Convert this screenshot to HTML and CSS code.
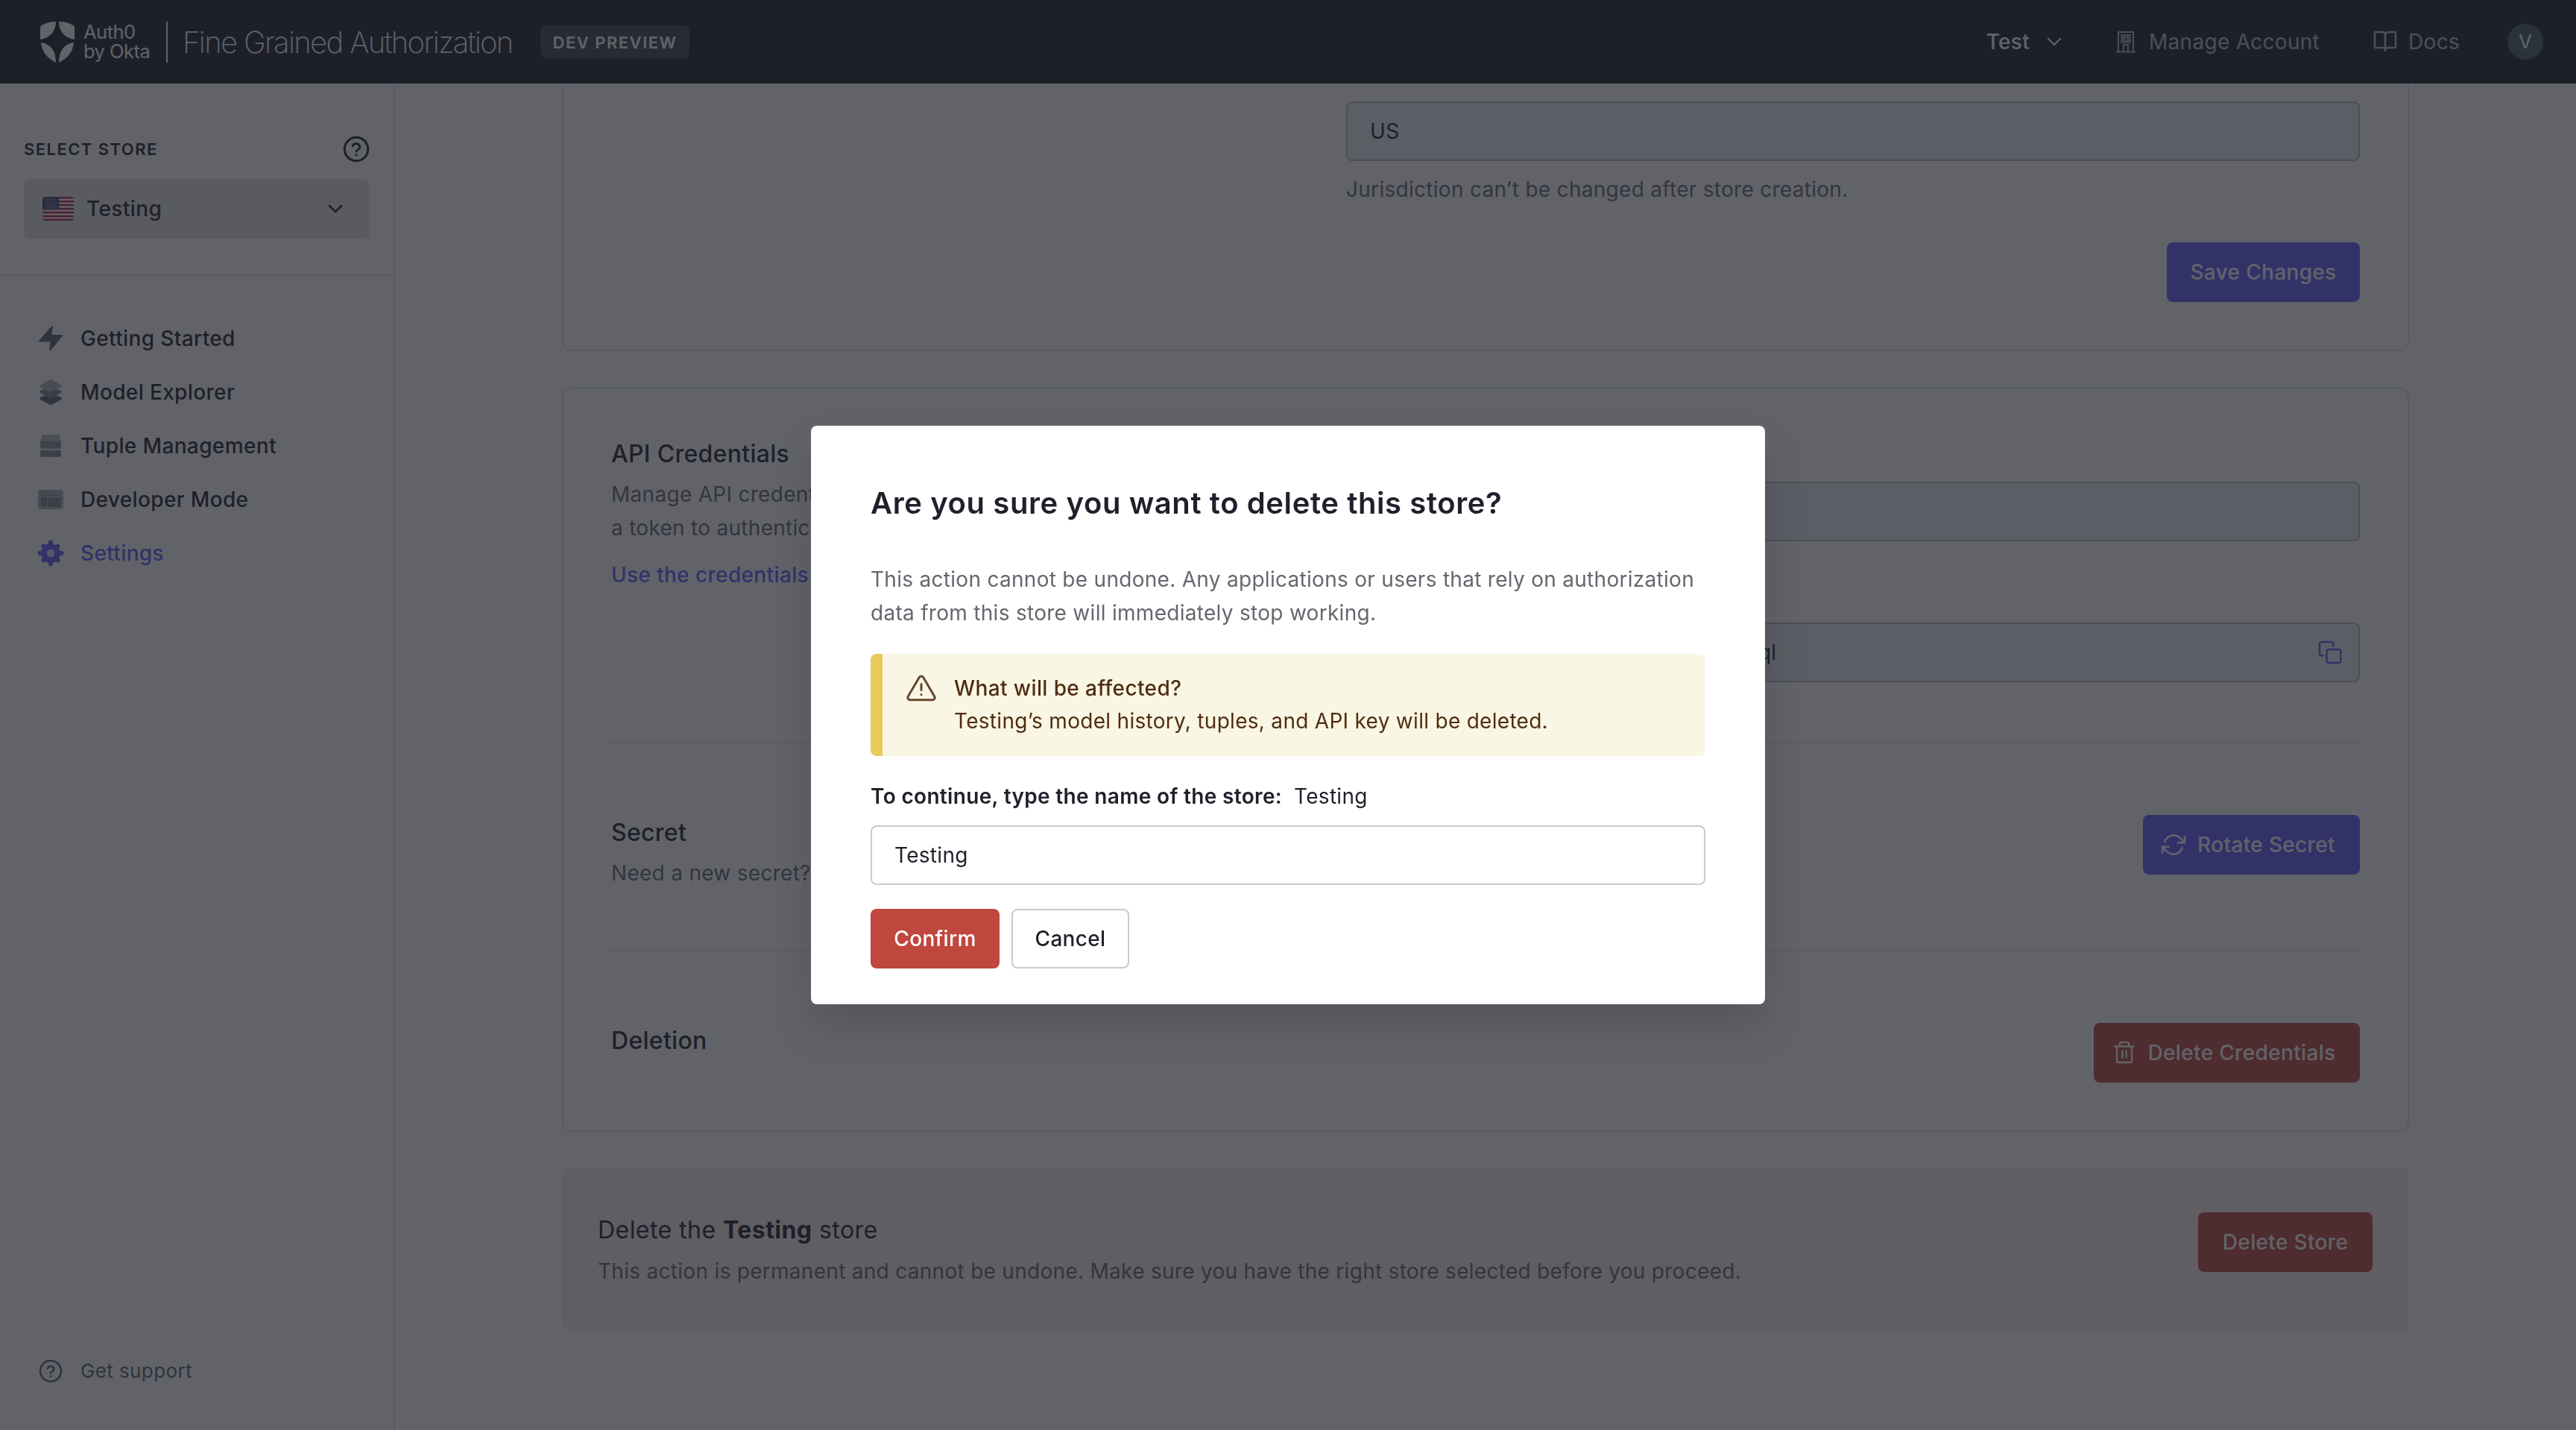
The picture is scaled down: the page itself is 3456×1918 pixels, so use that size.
FILE: index.html
```html
<!DOCTYPE html>
<html lang="en">
<head>
    <meta charset="UTF-8">
    <meta name="viewport" content="width=device-width, initial-scale=1.0">
    <title>Settings - Fine Grained Authorization</title>
    <link rel="stylesheet" href="styles.css">
</head>
<body>
    <!-- Header -->
    <header class="topbar">
        <svg class="shield" viewBox="0 0 46 55">
            <path d="M0 24V8Q0 6 2 5Q10 0 21 0C21 13 13 22 0 24Z"/>
            <path d="M46 24V8Q46 6 44 5Q36 0 25 0C25 13 33 22 46 24Z"/>
            <path d="M1 28C14 30 21 39 21 55C9 49 2 40 1 28Z"/>
            <path d="M45 28C32 30 25 39 25 55C37 49 44 40 45 28Z"/>
        </svg>
        <div class="brand">Auth0<br>by Okta</div>
        <div class="brand-line"></div>
        <div class="product">Fine Grained Authorization</div>
        <div class="pill">DEV PREVIEW</div>

        <nav class="topnav">
            <a class="tenant">Test
                <svg class="chevron" viewBox="0 0 20 12"><path d="M2 2l8 8 8-8"/></svg>
            </a>
            <a class="account">
                <svg class="icon-building" viewBox="0 0 28 30">
                    <path d="M1 28.5h26M4 28V2h20v26M11 28v-9h6v9"/>
                    <path d="M8.5 6h4v3.5h-4zM15.5 6h4v3.5h-4zM8.5 12.5h4V16h-4zM15.5 12.5h4V16h-4z"/>
                </svg>
                <span>Manage Account</span>
            </a>
            <a class="docs">
                <svg class="icon-book" viewBox="0 0 32 30">
                    <path d="M16 6c0-2.500-2-4-4.500-4H2v21h10c2.500 0 4 1.500 4 4M16 6c0-2.500 2-4 4.500-4H30v21H20c-2.500 0-4 1.500-4 4V6"/>
                </svg>
                <span>Docs</span>
            </a>
            <div class="avatar">V</div>
        </nav>
    </header>

    <div class="layout">
        <!-- Sidebar -->
        <aside class="sidebar">
            <div class="store">
                <div class="store-head">
                    <span>SELECT STORE</span>
                    <svg class="icon-help" viewBox="0 0 24 24"><circle cx="12" cy="12" r="10.500"/><path d="M8.800 9.300a3.300 3.300 0 0 1 6.400 1c0 2-3.200 2.300-3.200 3.700M12 17.200v.1"/></svg>
                </div>
                <div class="store-select">
                    <svg class="flag" viewBox="0 0 42 32">
                        <clipPath id="flag-clip"><rect width="42" height="32" rx="4"/></clipPath>
                        <g clip-path="url(#flag-clip)">
                            <rect width="42" height="32" fill="#fff"/>
                            <path d="M0 1.200h42M0 6.200h42M0 11.100h42M0 16h42M0 20.900h42M0 25.900h42M0 30.800h42" stroke="#b22234" stroke-width="2.460"/>
                            <rect width="22" height="17.200" fill="#3c3b6e"/>
                            <path d="M3 3.500h17M5 6.500h14M3 9.500h17M5 12.500h14M3 15h17" stroke="#fff" stroke-width="1.300" stroke-dasharray="1.300 2.800"/>
                        </g>
                    </svg>
                    <span>Testing</span>
                    <svg class="chevron" viewBox="0 0 20 12"><path d="M2 2l8 8 8-8"/></svg>
                </div>
            </div>

            <ul class="menu">
                <li>
                    <svg viewBox="0 0 36 36"><path d="M19 1.500q2-1.500 2 1L19.500 13H33q2 0 .8 1.800L18 34q-2 1.500-1.800-1L17.500 22.500H3.500q-2.500 0-1-2z" fill="#5b5f6d"/></svg>
                    <span>Getting Started</span>
                </li>
                <li>
                    <svg viewBox="0 0 36 36">
                        <path d="M4 25l14-6 14 6q2 1.500 0 2.800L20 34.500q-2 1-4 0L4 27.800q-2-1.300 0-2.800z" fill="#5b5f6d"/>
                        <path d="M4 16l14-6 14 6q2 1.500 0 2.800L20 25.500q-2 1-4 0L4 18.800q-2-1.300 0-2.800z" fill="#85888f"/>
                        <path d="M4 8.500L16 1.500q2-1 4 0l12 7q2 1.300 0 2.600l-12 5.800q-2 1-4 0L4 11.100q-2-1.300 0-2.600z" fill="#b0b2b6"/>
                    </svg>
                    <span>Model Explorer</span>
                </li>
                <li>
                    <svg viewBox="0 0 36 36">
                        <path d="M8 3h20q1 0 1.500 1L32 12H4L6.500 4Q7 3 8 3z" fill="#b8babf"/>
                        <path d="M4 12h28v7q0 2-2 2H6q-2 0-2-2z" fill="#8f929b"/>
                        <path d="M5 21h26v2H5z" fill="#b8babf"/>
                        <path d="M4 24h28v7q0 2-2 2H6q-2 0-2-2z" fill="#888b92"/>
                        <circle cx="27.500" cy="16.500" r="1.200" fill="#5b5f6d"/>
                        <circle cx="27.500" cy="28.500" r="1.200" fill="#5b5f6d"/>
                    </svg>
                    <span>Tuple Management</span>
                </li>
                <li>
                    <svg viewBox="0 0 36 36">
                        <rect x="1" y="5" width="34" height="26" rx="3" fill="#b0b2b6"/>
                        <path d="M4.500 12h27" stroke="#85888f" stroke-width="1.500"/>
                        <rect x="4.500" y="15" width="8.500" height="13" rx="1.500" fill="#85888f"/>
                        <rect x="14.500" y="15" width="17" height="13" rx="1.500" fill="#85888f"/>
                        <path d="M5 8.200h1.500M7.800 8.200h1.500M10.600 8.200h1.500" stroke="#5b5f6d" stroke-width="1.500"/>
                    </svg>
                    <span>Developer Mode</span>
                </li>
                <li class="active">
                    <svg viewBox="0 0 36 36">
                        <circle cx="18" cy="18" r="9" fill="none" stroke="currentColor" stroke-width="8"/>
                        <path d="M18 3.500v29M3.500 18h29M8.500 8.500l19 19M27.500 8.500l-19 19" stroke="currentColor" stroke-width="6" stroke-linecap="round"/>
                        <circle cx="18" cy="18" r="5.200" fill="#dddcf5"/>
                    </svg>
                    <span>Settings</span>
                </li>
            </ul>

            <div class="support">
                <svg class="icon-help" viewBox="0 0 24 24"><circle cx="12" cy="12" r="10.500"/><path d="M8.800 9.300a3.300 3.300 0 0 1 6.400 1c0 2-3.200 2.300-3.200 3.700M12 17.200v.1"/></svg>
                <span>Get support</span>
            </div>
        </aside>

        <!-- Settings -->
        <main class="content">
            <section class="card card-general">
                <div class="fields">
                    <div class="field">US</div>
                    <p class="hint">Jurisdiction can’t be changed after store creation.</p>
                    <button class="btn btn-primary btn-save">Save Changes</button>
                </div>
            </section>

            <section class="card card-api">
                <div class="row row-first">
                    <div class="info">
                        <h2>API Credentials</h2>
                        <p>Manage API credentials<br>a token to authenticate</p>
                        <a class="link">Use the credentials</a>
                    </div>
                    <div class="fields">
                        <div class="field"></div>
                        <div class="field field-copy">
                            <span>Zk4vN8sTgYx2RbHw6LmNd0cUe9aJuql</span>
                            <svg class="icon-copy" viewBox="0 0 32 32">
                                <rect x="11.500" y="12" width="19" height="18" rx="3"/>
                                <path d="M7 20.500H5a3 3 0 0 1-3-3V5a3 3 0 0 1 3-3h12.500a3 3 0 0 1 3 3v2"/>
                            </svg>
                        </div>
                    </div>
                </div>
                <div class="row">
                    <div class="info">
                        <h2>Secret</h2>
                        <p>Need a new secret?</p>
                    </div>
                    <button class="btn btn-primary btn-rotate">
                        <svg viewBox="0 0 24 24"><path d="M22.500 4v6h-6M1.500 20v-6h6"/><path d="M3.700 9a8.900 8.900 0 0 1 14.700-3.300l4.100 4.300M1.500 14l4.100 4.300A8.900 8.900 0 0 0 20.300 15"/></svg>
                        <span>Rotate Secret</span>
                    </button>
                </div>
                <div class="row row-last">
                    <div class="info">
                        <h2>Deletion</h2>
                    </div>
                    <button class="btn btn-danger btn-trash">
                        <svg viewBox="0 0 28 32"><path d="M1.500 7.500h25M8 7V4.500A2.500 2.500 0 0 1 10.500 2h7A2.500 2.500 0 0 1 20 4.500V7M4 8v18.500A2.500 2.500 0 0 0 6.500 29h15a2.500 2.500 0 0 0 2.500-2.500V8M11.400 13.500v9M16.600 13.500v9"/></svg>
                        <span>Delete Credentials</span>
                    </button>
                </div>
            </section>

            <section class="danger">
                <div class="info">
                    <h2>Delete the <strong>Testing</strong> store</h2>
                    <p>This action is permanent and cannot be undone. Make sure you have the right store selected before you proceed.</p>
                </div>
                <button class="btn btn-danger btn-store">Delete Store</button>
            </section>
        </main>
    </div>

    <!-- Confirm dialog -->
    <div class="overlay">
        <div class="modal">
            <h1>Are you sure you want to delete this store?</h1>
            <p class="modal-text">This action cannot be undone. Any applications or users that rely on authorization data from this store will immediately stop working.</p>
            <div class="alert">
                <svg viewBox="0 0 40 36"><path d="M17.300 3.500L2.300 29a3.200 3.200 0 0 0 2.700 4.800h30a3.200 3.200 0 0 0 2.700-4.800L22.700 3.500a3.200 3.200 0 0 0-5.400 0zM20 12.500v8M20 26.500v.2"/></svg>
                <div>
                    <b>What will be affected?</b>
                    <p>Testing’s model history, tuples, and API key will be deleted.</p>
                </div>
            </div>
            <div class="confirm-label"><b>To continue, type the name of the store:</b><span>Testing</span></div>
            <div class="confirm-input">Testing</div>
            <div class="actions">
                <button class="btn btn-confirm">Confirm</button>
                <button class="btn btn-cancel">Cancel</button>
            </div>
        </div>
    </div>
</body>
</html>
```
FILE: styles.css
```css
* {
    margin: 0;
    padding: 0;
    box-sizing: border-box;
}

body {
    font-family: Inter, Roboto, sans-serif;
    font-size: 28px;
    line-height: 45px;
    letter-spacing: 0.29px;
    color: #1e212a;
    background: #fff;
    height: 1918px;
    overflow: hidden;
}

svg {
    flex: none;
    display: block;
}

/* Header */
.topbar {
    display: flex;
    align-items: center;
    height: 112px;
    padding: 0 44px 0 54px;
    background: #1e212a;
    color: #fff;
}

.shield {
    width: 46px;
    height: 55px;
    fill: #fff;
}

.brand {
    width: 99px;
    margin-left: 12px;
    font-size: 25.5px;
    line-height: 26px;
    letter-spacing: -0.5px;
    white-space: nowrap;
}

.brand-line {
    width: 2px;
    height: 55px;
    margin-left: 12px;
    background: #fff;
}

.product {
    flex: none;
    width: 500px;
    padding-left: 20px;
    font-size: 40px;
    font-weight: 200;
    letter-spacing: -1.63px;
    white-space: nowrap;
}

.pill {
    width: 200px;
    height: 44px;
    border-radius: 8px;
    background: #41444d;
    font-size: 22px;
    font-weight: 600;
    line-height: 46px;
    letter-spacing: 1.5px;
    text-align: center;
}

.topnav {
    display: flex;
    align-items: center;
    margin-left: auto;
    color: #bcbdc2;
}

.topnav a {
    display: flex;
    align-items: center;
}

.tenant {
    color: #fff;
    font-weight: 500;
    gap: 23px;
    margin-right: 72px;
}

.account {
    gap: 17px;
    margin-right: 72px;
}

.docs {
    gap: 15px;
    margin-right: 64px;
}

.chevron {
    width: 20px;
    height: 12px;
    fill: none;
    stroke: currentColor;
    stroke-width: 2.6;
    stroke-linecap: round;
    stroke-linejoin: round;
}

.tenant .chevron {
    stroke-width: 2.2;
}

.icon-building {
    width: 28px;
    height: 30px;
    fill: none;
    stroke: currentColor;
    stroke-width: 2;
}

.icon-book {
    width: 32px;
    height: 30px;
    fill: none;
    stroke: currentColor;
    stroke-width: 2.6;
    stroke-linejoin: round;
}

.avatar {
    width: 48px;
    height: 48px;
    border-radius: 50%;
    background: #465a69;
    color: #fff;
    font-size: 26px;
    line-height: 48px;
    text-align: center;
}

/* Layout */
.layout {
    display: flex;
    height: 1806px;
}

.sidebar {
    display: flex;
    flex-direction: column;
    width: 530px;
    border-right: 2px solid #e3e4e6;
}

.store {
    height: 258px;
    padding: 66px 32px 0;
    border-bottom: 2px solid #e3e4e6;
}

.store-head {
    display: flex;
    align-items: center;
    justify-content: space-between;
    height: 44px;
    font-size: 22px;
    font-weight: 600;
    letter-spacing: 1.45px;
}

.icon-help {
    width: 36px;
    height: 36px;
    fill: none;
    stroke: currentColor;
    stroke-width: 2;
    stroke-linecap: round;
}

.store-select {
    display: flex;
    align-items: center;
    height: 80px;
    margin-top: 18px;
    padding: 0 36px 0 25px;
    border-radius: 8px;
    background: #e3e3e4;
    font-weight: 500;
    letter-spacing: 0.4px;
}

.flag {
    width: 42px;
    height: 32px;
    margin-right: 17px;
}

.store-select .chevron {
    margin-left: auto;
}

.menu {
    list-style: none;
    padding-top: 48px;
    font-weight: 500;
    letter-spacing: 0.36px;
}

.menu li {
    display: flex;
    align-items: center;
    gap: 22px;
    height: 72px;
    padding-left: 50px;
}

.menu svg {
    width: 36px;
    height: 36px;
}

.menu .active {
    color: #635dff;
}

.support {
    display: flex;
    align-items: center;
    gap: 24px;
    margin: auto 0 57px 52px;
    color: #5b5f6d;
    font-size: 26px;
    letter-spacing: 0.4px;
}

.support .icon-help {
    width: 32px;
    height: 32px;
}

.content {
    flex: 1;
    padding: 0 224px;
}

/* Cards */
.card {
    border: 2px solid #e3e4e6;
    border-radius: 12px;
    padding: 0 64px 64px;
}

.card-general {
    display: flex;
    justify-content: flex-end;
    height: 359px;
    padding-top: 24px;
    border-top: none;
    border-radius: 0 0 12px 12px;
}

.card-api {
    margin-top: 48px;
}

.fields {
    display: flex;
    flex-direction: column;
    width: 1360px;
}

.field {
    display: flex;
    align-items: center;
    height: 80px;
    padding: 0 30px;
    border: 2px solid #babbc0;
    border-radius: 8px;
    background: #ebeef2;
}

.field-copy {
    justify-content: space-between;
    margin-top: 109px;
    padding-right: 22px;
}

.icon-copy {
    width: 32px;
    height: 32px;
    fill: none;
    stroke: #635dff;
    stroke-width: 2.6;
    stroke-linecap: round;
}

.hint,
.info p {
    color: #65676e;
}

.hint {
    margin-top: 16px;
}

.row {
    display: flex;
    justify-content: space-between;
    align-items: flex-start;
    padding: 96px 0 80px;
    border-bottom: 2px solid #e3e4e6;
}

.row-first {
    padding: 64px 0 80px;
}

.row-first .fields {
    padding-top: 61px;
}

.row-last {
    padding-bottom: 0;
    border-bottom: none;
}

.info h2 {
    font-size: 32px;
    font-weight: 500;
    line-height: 48px;
    margin-bottom: 8px;
}

.link {
    display: block;
    margin-top: 18px;
    color: #635dff;
    font-weight: 500;
    letter-spacing: 0.36px;
}

.danger {
    display: flex;
    justify-content: space-between;
    align-items: flex-start;
    height: 220px;
    margin-top: 48px;
    padding: 60px 49px 0 48px;
    border-radius: 12px;
    background: #faebeb;
}

.danger h2 {
    font-weight: 400;
    letter-spacing: 0.45px;
    margin-bottom: 9px;
}

.danger strong {
    font-weight: 700;
}

/* Buttons */
.btn {
    display: flex;
    align-items: center;
    justify-content: center;
    height: 80px;
    border: none;
    border-radius: 8px;
    color: #fff;
    font: inherit;
    font-weight: 500;
    letter-spacing: 0.34px;
    white-space: nowrap;
}

.btn svg {
    fill: none;
    stroke: currentColor;
    stroke-linecap: round;
    stroke-linejoin: round;
}

.btn-primary {
    background: #635dff;
}

.btn-danger {
    background: #c0473d;
}

.btn-save {
    width: 259px;
    margin-top: 48px;
    align-self: flex-end;
}

.btn-rotate {
    width: 291px;
    padding-right: 9px;
    gap: 15px;
}

.btn-rotate svg {
    width: 34px;
    height: 34px;
    stroke-width: 1.8;
}

.btn-trash {
    width: 357px;
    padding-right: 6px;
    gap: 18px;
}

.btn-trash svg {
    width: 28px;
    height: 32px;
    stroke-width: 2.4;
}

.btn-store {
    width: 234px;
}

/* Confirm dialog */
.overlay {
    position: fixed;
    inset: 0;
    display: flex;
    align-items: center;
    justify-content: center;
    background: rgba(30, 33, 41, 0.7);
}

.modal {
    width: 1280px;
    height: 776px;
    padding: 76px 80px 48px;
    border-radius: 8px;
    background: #fff;
    box-shadow: 0 30px 60px rgba(0, 0, 0, 0.14);
}

.modal h1 {
    font-size: 40px;
    font-weight: 600;
    line-height: 56px;
    letter-spacing: 0.6px;
}

.modal-text {
    margin-top: 52px;
    color: #65676e;
}

.alert {
    display: flex;
    gap: 24px;
    height: 137px;
    margin-top: 32px;
    padding: 24px 32px;
    border-left: 16px solid #e5cb5b;
    border-radius: 8px;
    background: #faf6e4;
    color: #4f2d12;
    line-height: 44px;
}

.alert svg {
    width: 40px;
    height: 36px;
    margin-top: 4px;
    fill: none;
    stroke: #66472f;
    stroke-width: 3;
    stroke-linecap: round;
    stroke-linejoin: round;
}

.alert b {
    font-weight: 500;
    letter-spacing: 0.4px;
}

.confirm-label {
    display: flex;
    gap: 16px;
    margin-top: 32px;
    line-height: 44px;
}

.confirm-label b {
    font-weight: 600;
    letter-spacing: 0.33px;
}

.confirm-input {
    height: 80px;
    margin-top: 17px;
    padding: 0 30px;
    border: 2px solid #c9cace;
    border-radius: 8px;
    line-height: 76px;
}

.actions {
    display: flex;
    gap: 16px;
    margin-top: 32px;
}

.btn-confirm {
    width: 173px;
    background: #c0473d;
}

.btn-cancel {
    width: 158px;
    border: 2px solid #c9cace;
    background: #fff;
    color: #1e212a;
}
```
